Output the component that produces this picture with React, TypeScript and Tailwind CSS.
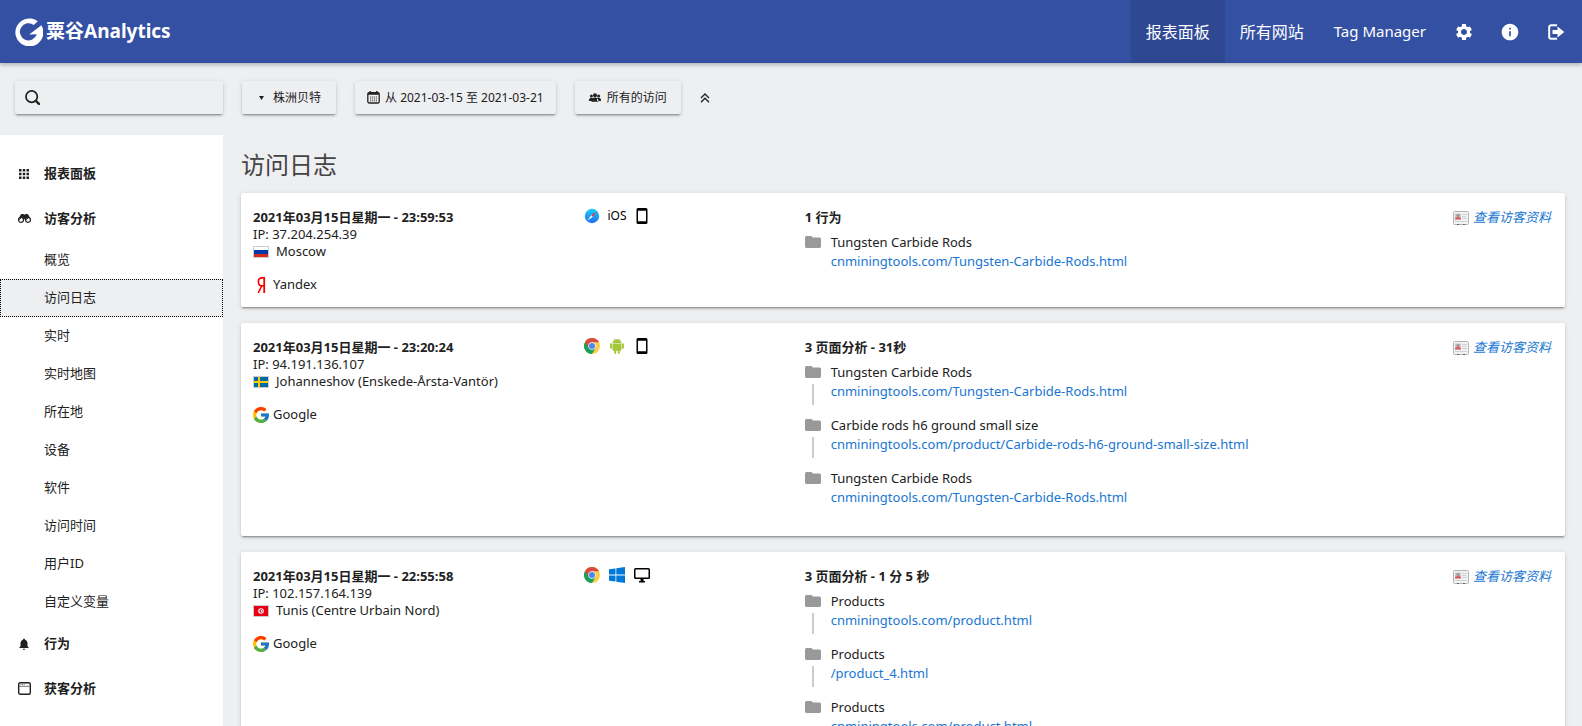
import type { ReactNode } from "react";
import { FcGoogle } from "react-icons/fc";
import { MdSettings, MdInfo, MdNotifications, MdFolder } from "react-icons/md";

function Logo() {
  return (
    <svg width="28" height="28" viewBox="0 0 28 28" aria-hidden="true">
      <path
        fill="#fff"
        d="M22.8 3.2 18.800 7A8.600 8.600 0 1 0 21.800 16.200L14.200 16.400 26.400 7.200A14 14 0 1 1 22.800 3.200Z"
      />
    </svg>
  );
}

function LogoutIcon() {
  return (
    <svg width="16" height="16" viewBox="0 0 16 16" fill="none" aria-hidden="true">
      <path d="M9 1.2H3.2A2 2 0 0 0 1.2 3.2v9.6a2 2 0 0 0 2 2H9" stroke="#fff" strokeWidth="2" />
      <path d="M4.5 6h5V2.500l6.700 5.500-6.700 5.500V10h-5Z" fill="#fff" />
    </svg>
  );
}

function SearchIcon() {
  return (
    <svg width="15" height="15" viewBox="0 0 14 14" fill="none" className="shrink-0" aria-hidden="true">
      <circle cx="6.2" cy="6.2" r="5.3" stroke="#212121" strokeWidth="1.6" />
      <path d="M10.200 10.200l2.800 2.800" stroke="#212121" strokeWidth="2.2" strokeLinecap="round" />
    </svg>
  );
}

function CalendarIcon() {
  return (
    <svg width="13" height="13" viewBox="0 0 13 13" fill="none" aria-hidden="true">
      <rect x="0.8" y="1.6" width="11.4" height="10.4" rx="1.6" stroke="#212121" strokeWidth="1.3" />
      <path d="M1 1.4h11v2.400H1zM2.500 0h1.400v2H2.500zM9.100 0h1.400v2H9.100z" fill="#212121" />
      <path d="M3 6h7M3 7.900h7M3 9.800h7" stroke="#444" strokeWidth="1" strokeDasharray="1.2 0.8" />
    </svg>
  );
}

function GroupIcon() {
  return (
    <svg width="12" height="9" viewBox="0 0 12 9" fill="#212121" aria-hidden="true">
      <circle cx="6" cy="2.300" r="2" />
      <circle cx="2.4" cy="3" r="1.5" />
      <circle cx="9.6" cy="3" r="1.5" />
      <path d="M2.500 8.800C2.500 6 3.800 4.600 6 4.600s3.500 1.400 3.500 4.200ZM0 7.800C0 5.600.8 4.800 2.400 4.800L4 6v2H0ZM12 7.800c0-2.200-.8-3-2.400-3L8 6v2h4Z" />
    </svg>
  );
}

function ChevronsUpIcon() {
  return (
    <svg width="10" height="10" viewBox="0 0 10 10" fill="none" stroke="#212121" strokeWidth="1.3" aria-hidden="true">
      <path d="M1 5l4-4 4 4M1 9.200l4-4 4 4" />
    </svg>
  );
}

function GridIcon() {
  return (
    <svg width="10" height="10" viewBox="0 0 10 10" fill="#212121" aria-hidden="true">
      <path d="M0 0h2.500v2.500H0zM3.750 0h2.500v2.500h-2.500zM7.500 0H10v2.500H7.500zM0 3.750h2.500v2.500H0zM3.750 3.750h2.500v2.500h-2.500zM7.500 3.750H10v2.500H7.500zM0 7.500h2.500V10H0zM3.750 7.500h2.500V10h-2.500zM7.500 7.500H10V10H7.500z" />
    </svg>
  );
}

function BinocularsIcon() {
  return (
    <svg width="13" height="9" viewBox="0 0 13 9" aria-hidden="true">
      <path d="M3.200 0h2l1.300.8L7.800 0h2L13 5.500 9 7 6.500 5 4 7 0 5.500Z" fill="#212121" />
      <circle cx="3" cy="5.800" r="2.500" fill="#fff" stroke="#212121" strokeWidth="1.200" />
      <circle cx="10" cy="5.800" r="2.500" fill="#fff" stroke="#212121" strokeWidth="1.200" />
      <path d="M1.500 5.800A1.500 1.500 0 0 1 3 4.300M8.500 5.800A1.500 1.500 0 0 1 10 4.300" stroke="#212121" strokeWidth="0.900" fill="none" />
    </svg>
  );
}

function WindowIcon() {
  return (
    <svg width="13" height="13" viewBox="0 0 13 13" fill="none" aria-hidden="true">
      <rect x="0.700" y="0.700" width="11.600" height="11.600" rx="1.500" stroke="#212121" strokeWidth="1.400" />
      <path d="M1 4.300h11" stroke="#777" strokeWidth="1" />
      <path d="M2.300 2.600h4.500" stroke="#777" strokeWidth="1" strokeDasharray="1 0.700" />
    </svg>
  );
}

function SafariIcon() {
  return (
    <svg width="16" height="16" viewBox="0 0 16 16" role="img" aria-label="Safari">
      <defs>
        <linearGradient id="safari-sky" x1="0" y1="0" x2="0" y2="1">
          <stop offset="0" stopColor="#19d0fb" />
          <stop offset="1" stopColor="#1f6df0" />
        </linearGradient>
      </defs>
      <circle cx="8" cy="8" r="7.200" fill="url(#safari-sky)" />
      <path d="M12.800 3.200 7.200 7.200l1.600 1.600Z" fill="#f03a34" />
      <path d="M3.200 12.800 7.200 7.200l1.600 1.600Z" fill="#fff" />
    </svg>
  );
}

function ChromeIcon() {
  return (
    <svg width="16" height="16" viewBox="0 0 16 16" role="img" aria-label="Chrome">
      <circle cx="8" cy="8" r="8" fill="#fbcd43" />
      <path d="M1.070 4A8 8 0 0 0 8 16l3.460-6-3.460-2Z" fill="#17a05e" />
      <path d="M8 4.300h7.100A8 8 0 0 0 1.070 4L4.600 10Z" fill="#db4a3f" />
      <circle cx="8" cy="8" r="3.700" fill="#f4f4f4" />
      <circle cx="8" cy="8" r="3" fill="#4a87f2" />
    </svg>
  );
}

function AndroidIcon() {
  return (
    <svg width="16" height="16" viewBox="0 0 16 16" fill="#a4c639" role="img" aria-label="Android">
      <path d="M3.500 4.900C3.600 3 5.400 1.300 8 1.300s4.400 1.700 4.500 3.600Z" />
      <path d="M5.200.4l1 1.700M10.800.4l-1 1.700" stroke="#a4c639" strokeWidth="0.500" />
      <path d="M3.500 5.400h9v6.400a1 1 0 0 1-1 1h-7a1 1 0 0 1-1-1Z" />
      <rect x="1.100" y="5.300" width="1.900" height="5.400" rx="0.950" />
      <rect x="13" y="5.300" width="1.900" height="5.400" rx="0.950" />
      <rect x="5.300" y="11" width="1.900" height="4.900" rx="0.950" />
      <rect x="8.800" y="11" width="1.900" height="4.900" rx="0.950" />
      <circle cx="6" cy="3.300" r="0.400" fill="#fff" />
      <circle cx="10" cy="3.300" r="0.400" fill="#fff" />
    </svg>
  );
}

function WindowsIcon() {
  return (
    <svg width="16" height="16" viewBox="0 0 16 16" fill="#0078d7" role="img" aria-label="Windows">
      <path d="M0 2.300 6.500 1.400V7.600H0ZM7.300 1.300 16 0v7.600H7.300ZM0 8.400h6.500v6.200L0 13.700ZM7.300 8.400H16V16l-8.700-1.300Z" />
    </svg>
  );
}

function PhoneIcon() {
  return (
    <svg width="16" height="16" viewBox="0 0 16 16" role="img" aria-label="Smartphone">
      <path fillRule="evenodd" d="M4 0h8a1.500 1.500 0 0 1 1.500 1.500v13A1.500 1.500 0 0 1 12 16H4a1.500 1.500 0 0 1-1.500-1.500v-13A1.500 1.500 0 0 1 4 0ZM4 2.700v10.600h8V2.700Z" />
    </svg>
  );
}

function DesktopIcon() {
  return (
    <svg width="16" height="16" viewBox="0 0 16 16" role="img" aria-label="Desktop">
      <path fillRule="evenodd" d="M1.500 1h13A1.500 1.500 0 0 1 16 2.500v8a1.500 1.500 0 0 1-1.500 1.500h-13A1.500 1.500 0 0 1 0 10.500v-8A1.500 1.500 0 0 1 1.500 1ZM1.500 2.500v8h13v-8ZM6.500 12h3v2H11v1.500H5V14h1.500Z" />
    </svg>
  );
}

function YandexIcon() {
  return (
    <svg width="16" height="16" viewBox="0 0 16 16" fill="none" stroke="#f00" aria-hidden="true">
      <path d="M11.200 0v16" strokeWidth="1.800" />
      <path d="M11 .9H9C6.700.9 5.400 2.300 5.400 4.700S6.700 8.900 9 8.900h2M8.600 9 5.200 16" strokeWidth="1.600" />
    </svg>
  );
}

function ProfileIcon() {
  return (
    <svg width="16" height="14" viewBox="0 0 16 14" aria-hidden="true">
      <rect x="0.500" y="0.500" width="15" height="13" rx="1" fill="#f3f3f3" stroke="#b4b4b4" />
      <rect x="2" y="2.500" width="6" height="6" fill="#b9cbe6" />
      <circle cx="5" cy="4.600" r="1.500" fill="#b98a6f" />
      <path d="M2 8.500c0-1.600 1-2.400 3-2.400s3 .8 3 2.400Z" fill="#e0575c" />
      <path d="M9 3.500h5M9 5.500h4M9 7.500h5M2 10.500h12" stroke="#d0d0d0" />
      <path d="M4 13.500h2M10 13.500h2" stroke="#666" />
    </svg>
  );
}

function Flag({ country }: { country: string }) {
  return (
    <svg width="16" height="12" viewBox="0 0 16 12" role="img" aria-label={country}>
      {country === "Russia" && (
        <>
          <rect width="16" height="12" fill="#fff" />
          <path d="M0 4h16v4H0z" fill="#0039a6" />
          <path d="M0 8h16v4H0z" fill="#d52b1e" />
        </>
      )}
      {country === "Sweden" && (
        <>
          <rect width="16" height="12" fill="#006aa7" />
          <path d="M5 0h2v12H5zM0 5h16v2H0z" fill="#fecc00" />
        </>
      )}
      {country === "Tunisia" && (
        <>
          <rect width="16" height="12" fill="#e70013" />
          <circle cx="8" cy="6" r="2.800" fill="#fff" />
          <circle cx="8.200" cy="6" r="1.700" fill="#e70013" />
          <circle cx="8.700" cy="6" r="0.900" fill="#fff" />
        </>
      )}
      <rect x="0.500" y="0.500" width="15" height="11" fill="none" stroke="#cdcdcd" />
    </svg>
  );
}

type Action = { title: string; url: string };
type Visit = {
  date: string;
  ip: string;
  country: string;
  city: string;
  referrer: string;
  devices: ReactNode[];
  summary: string;
  actions: Action[];
};

const rods: Action = { title: "Tungsten Carbide Rods", url: "cnminingtools.com/Tungsten-Carbide-Rods.html" };

const visits: Visit[] = [
  {
    date: "2021年03月15日星期一 - 23:59:53",
    ip: "37.204.254.39",
    country: "Russia",
    city: "Moscow",
    referrer: "Yandex",
    devices: [<SafariIcon />, <span className="text-xs text-black">iOS</span>, <PhoneIcon />],
    summary: "1 行为",
    actions: [rods],
  },
  {
    date: "2021年03月15日星期一 - 23:20:24",
    ip: "94.191.136.107",
    country: "Sweden",
    city: "Johanneshov (Enskede-Årsta-Vantör)",
    referrer: "Google",
    devices: [<ChromeIcon />, <AndroidIcon />, <PhoneIcon />],
    summary: "3 页面分析 - 31秒",
    actions: [
      rods,
      {
        title: "Carbide rods h6 ground small size",
        url: "cnminingtools.com/product/Carbide-rods-h6-ground-small-size.html",
      },
      rods,
    ],
  },
  {
    date: "2021年03月15日星期一 - 22:55:58",
    ip: "102.157.164.139",
    country: "Tunisia",
    city: "Tunis (Centre Urbain Nord)",
    referrer: "Google",
    devices: [<ChromeIcon />, <WindowsIcon />, <DesktopIcon />],
    summary: "3 页面分析 - 1 分 5 秒",
    actions: [
      { title: "Products", url: "cnminingtools.com/product.html" },
      { title: "Products", url: "/product_4.html" },
      { title: "Products", url: "cnminingtools.com/product.html" },
    ],
  },
];

const reports = ["概览", "访问日志", "实时", "实时地图", "所在地", "设备", "软件", "访问时间", "用户ID", "自定义变量"];

function MenuSection({ icon, label }: { icon: ReactNode; label: string }) {
  return (
    <a href="#" className="flex h-[45px] items-center pl-3 font-bold">
      <span className="flex w-6 justify-center">{icon}</span>
      <span className="ml-2">{label}</span>
    </a>
  );
}

function VisitCard({ visit }: { visit: Visit }) {
  return (
    <article className="grid grid-cols-12 rounded-xs bg-white pt-4 pb-[14px] shadow-[0_2px_2px_0_rgba(0,0,0,0.14),0_1px_5px_0_rgba(0,0,0,0.12),0_3px_1px_-2px_rgba(0,0,0,0.2)]">
      <div className="col-span-3 px-3 leading-[17px]">
        <h2 className="font-bold">{visit.date}</h2>
        <p>IP: {visit.ip}</p>
        <p className="flex items-center gap-[7px]">
          <Flag country={visit.country} />
          {visit.city}
        </p>
        <p className="mt-4 flex items-center gap-1">
          {visit.referrer === "Google" ? <FcGoogle size={16} viewBox="4 4 40 40" /> : <YandexIcon />}
          {visit.referrer}
        </p>
      </div>
      <div className="col-span-2 flex h-[14px] items-center gap-[5px] px-[10px]">
        {visit.devices.map((device, i) => (
          <span key={i} className="flex w-5 justify-center">
            {device}
          </span>
        ))}
      </div>
      <div className="col-span-7 pr-[14px] pl-3">
        <div className="flex items-center justify-between leading-[17px]">
          <h3 className="font-bold">{visit.summary}</h3>
          <a href="#" className="flex items-center gap-1 text-[#1976d2] italic">
            <ProfileIcon />
            查看访客资料
          </a>
        </div>
        <ol className="pb-[7px]">
          {visit.actions.map((action, i) => (
            <li key={i} className="flex h-[53px] gap-[10px] pt-[7px]">
              <div className="flex w-4 flex-col items-center gap-[6px] pt-[3px]">
                <MdFolder viewBox="2 4 20 16" preserveAspectRatio="none" color="#999" className="h-3 w-4 shrink-0" />
                {i < visit.actions.length - 1 && <span className="h-[21px] w-[2px] bg-[#ccc]" />}
              </div>
              <div className="leading-[19px]">
                <p>{action.title}</p>
                <a href="#" className="text-[#1976d2]">
                  {action.url}
                </a>
              </div>
            </li>
          ))}
        </ol>
      </div>
    </article>
  );
}

const control =
  "flex h-[33px] items-center rounded-xs bg-[#eeeff1] text-xs shadow-[0_2px_2px_0_rgba(0,0,0,0.14),0_1px_5px_0_rgba(0,0,0,0.12),0_3px_1px_-2px_rgba(0,0,0,0.2)]";

export default function App() {
  return (
    <div className="flex h-screen flex-col overflow-hidden bg-[#eeeff1] font-['Noto_Sans','Noto_Sans_CJK_SC',sans-serif] text-[13px] text-[#212121]">
      <header className="flex h-[63px] shrink-0 items-center justify-between bg-[#3450a3] pr-[3px] pl-[15px] text-white shadow-[0_2px_4px_rgba(0,0,0,0.25)]">
        <a href="#" className="flex items-center gap-[3px] text-[19px] font-bold">
          <Logo />
          粟谷Analytics
        </a>
        <nav className="flex h-full items-center text-base">
          <a href="#" className="flex h-full items-center bg-[#2e4992] px-[15px]">
            报表面板
          </a>
          <a href="#" className="px-[15px]">
            所有网站
          </a>
          <a href="#" className="px-[15px] text-[15px]">
            Tag Manager
          </a>
          <a href="#" aria-label="管理" className="px-[13px]">
            <MdSettings size={20} />
          </a>
          <a href="#" aria-label="帮助" className="px-[13px]">
            <MdInfo size={20} />
          </a>
          <a href="#" aria-label="退出" className="px-[15px]">
            <LogoutIcon />
          </a>
        </nav>
      </header>

      <div className="flex shrink-0 items-center gap-[19px] pt-[18px] pb-[21px] pl-[15px]">
        <label className={`${control} w-[208px] gap-2 px-[10px]`}>
          <SearchIcon />
          <input type="search" aria-label="搜索" className="w-full min-w-0 bg-transparent outline-none" />
        </label>
        <button type="button" className={`${control} gap-2 px-[15px]`}>
          <span className="flex w-2 justify-center">
            <svg width="5" height="4" viewBox="0 0 5 4" aria-hidden="true">
              <path d="M0 0h5L2.500 4Z" fill="#212121" />
            </svg>
          </span>
          株洲贝特
        </button>
        <button type="button" className={`${control} gap-[5px] px-3`}>
          <CalendarIcon />从 2021-03-15 至 2021-03-21
        </button>
        <button type="button" className={`${control} gap-[6px] px-[14px]`}>
          <GroupIcon />
          所有的访问
        </button>
        <button type="button" aria-label="收起">
          <ChevronsUpIcon />
        </button>
      </div>

      <div className="flex min-h-0 grow">
        <nav className="w-[223px] shrink-0 bg-white pt-4">
          <MenuSection icon={<GridIcon />} label="报表面板" />
          <MenuSection icon={<BinocularsIcon />} label="访客分析" />
          <ul>
            {reports.map((name) => (
              <li key={name}>
                <a
                  href="#"
                  className={
                    name === "访问日志"
                      ? "flex h-[38px] items-center bg-[#eeeff1] pl-11 outline-1 -outline-offset-1 outline-black outline-dotted"
                      : "flex h-[38px] items-center pl-11"
                  }
                >
                  {name}
                </a>
              </li>
            ))}
          </ul>
          <MenuSection icon={<MdNotifications size={14} />} label="行为" />
          <MenuSection icon={<WindowIcon />} label="获客分析" />
        </nav>
        <main className="min-w-0 grow pr-[17px] pl-[18px]">
          <h1 className="pt-[14px] pb-3 text-2xl text-[#444]">访问日志</h1>
          <div className="flex flex-col gap-4">
            {visits.map((visit) => (
              <VisitCard key={visit.date} visit={visit} />
            ))}
          </div>
        </main>
      </div>
    </div>
  );
}
